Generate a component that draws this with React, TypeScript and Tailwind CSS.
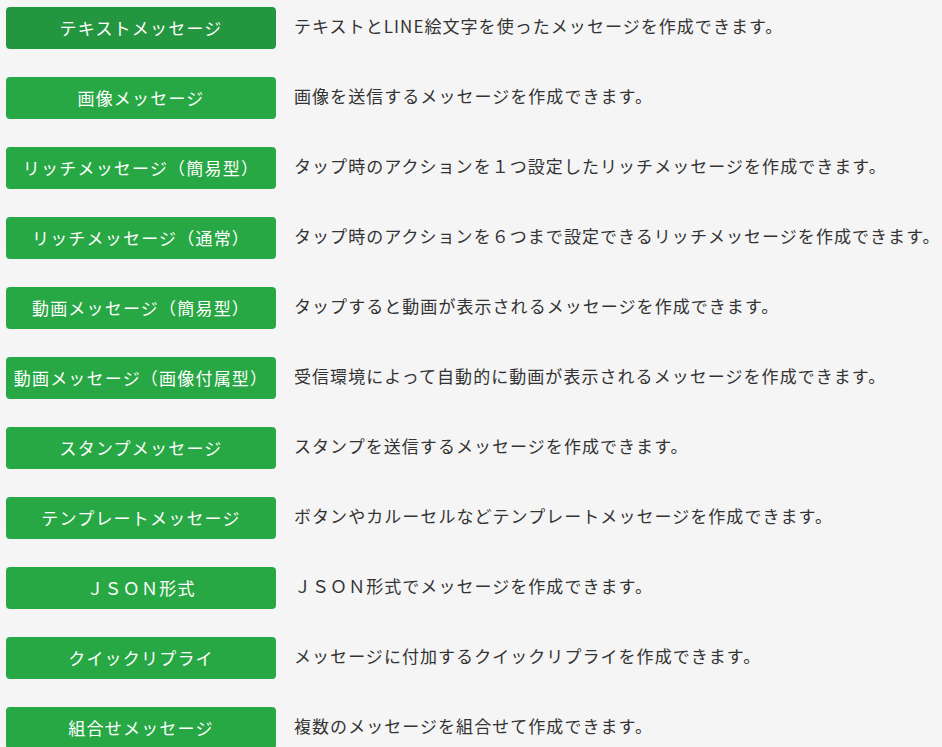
const ITEMS = [
  { label: "テキストメッセージ", desc: "テキストとLINE絵文字を使ったメッセージを作成できます。", active: true },
  { label: "画像メッセージ", desc: "画像を送信するメッセージを作成できます。" },
  { label: "リッチメッセージ（簡易型）", desc: "タップ時のアクションを１つ設定したリッチメッセージを作成できます。" },
  { label: "リッチメッセージ（通常）", desc: "タップ時のアクションを６つまで設定できるリッチメッセージを作成できます。" },
  { label: "動画メッセージ（簡易型）", desc: "タップすると動画が表示されるメッセージを作成できます。" },
  { label: "動画メッセージ（画像付属型）", desc: "受信環境によって自動的に動画が表示されるメッセージを作成できます。" },
  { label: "スタンプメッセージ", desc: "スタンプを送信するメッセージを作成できます。" },
  { label: "テンプレートメッセージ", desc: "ボタンやカルーセルなどテンプレートメッセージを作成できます。" },
  { label: "ＪＳＯＮ形式", desc: "ＪＳＯＮ形式でメッセージを作成できます。" },
  { label: "クイックリプライ", desc: "メッセージに付加するクイックリプライを作成できます。" },
  { label: "組合せメッセージ", desc: "複数のメッセージを組合せて作成できます。" },
];

export default function App() {
  return (
    <div className="h-[747px] overflow-hidden bg-[#f5f5f5] pl-[6px] pt-[7px] font-['Noto_Sans_CJK_JP','Noto_Sans',sans-serif]">
      <ul className="flex flex-col gap-[28px]">
        {ITEMS.map((it) => (
          <li key={it.label} className="flex items-center">
            <button
              className={
                "flex h-[42px] w-[270px] shrink-0 items-center justify-center rounded-[4px] text-[17px] tracking-[1.2px] text-white " +
                (it.active ? "bg-[#23963f]" : "bg-[#28a745]")
              }
            >
              {it.label}
            </button>
            <p className="ml-[18px] -mt-[4px] whitespace-nowrap text-[17px] tracking-[1.05px] text-[#333]">
              {it.desc}
            </p>
          </li>
        ))}
      </ul>
    </div>
  );
}
